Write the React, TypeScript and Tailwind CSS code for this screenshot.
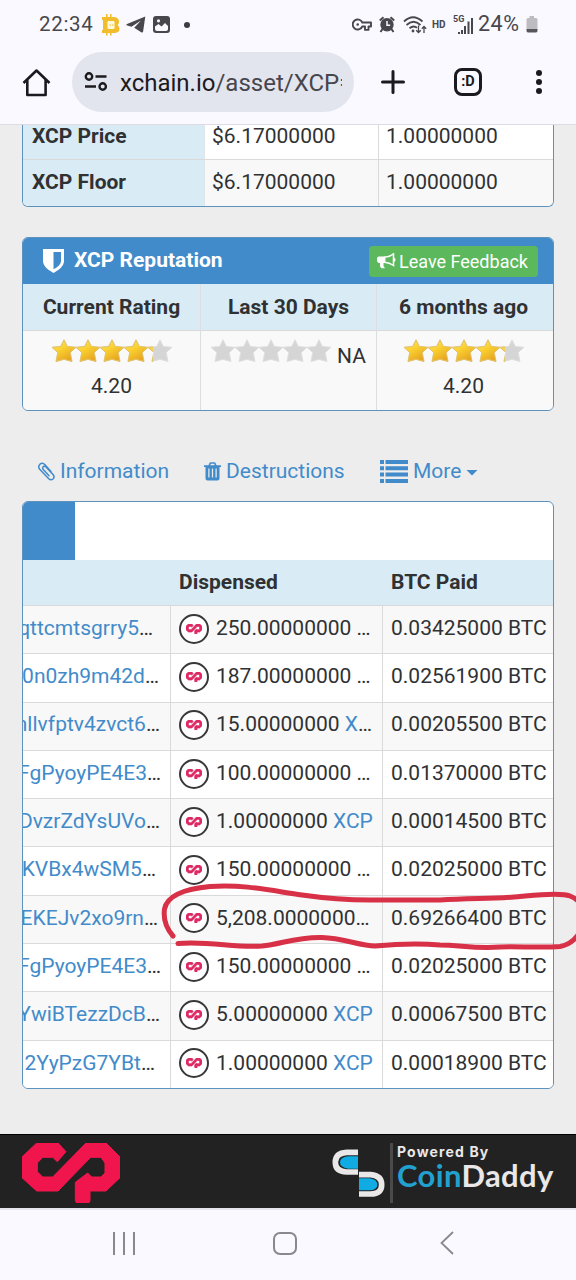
import type { ReactNode } from "react"
import clsx from "clsx"

interface Dispense {
  address: string
  // space left between the ellipsis and the cell border
  inset: number
  amount: string
  asset?: string
  truncated?: boolean
  paid: string
}

const dispenses: Dispense[] = [
  { address: "qttcmtsgrry5", inset: 17, amount: "250.00000000 ", truncated: true, paid: "0.03425000" },
  { address: "0n0zh9m42d", inset: 11, amount: "187.00000000 ", truncated: true, paid: "0.02561900" },
  { address: "nllvfptv4zvct6", inset: 10, amount: "15.00000000 ", asset: "X", truncated: true, paid: "0.00205500" },
  { address: "FgPyoyPE4E3", inset: 9, amount: "100.00000000 ", truncated: true, paid: "0.01370000" },
  { address: "DvzrZdYsUVo", inset: 10, amount: "1.00000000 ", asset: "XCP", paid: "0.00014500" },
  { address: "KVBx4wSM5", inset: 14, amount: "150.00000000 ", truncated: true, paid: "0.02025000" },
  { address: "EKEJv2xo9rn", inset: 12, amount: "5,208.0000000", truncated: true, paid: "0.69266400" },
  { address: "FgPyoyPE4E3", inset: 9, amount: "150.00000000 ", truncated: true, paid: "0.02025000" },
  { address: "YwiBTezzDcB", inset: 10, amount: "5.00000000 ", asset: "XCP", paid: "0.00067500" },
  { address: "2YyPzG7YBt", inset: 15, amount: "1.00000000 ", asset: "XCP", paid: "0.00018900" },
]

function CounterpartyMark({ className }: { className?: string }) {
  return (
    <svg viewBox="0 0 294 180" className={className} preserveAspectRatio="none" fill="currentColor" stroke="currentColor" strokeLinejoin="round">
      <path d="M44 0H108L132 26L106 56L92 43H62L46 60V86L62 102H92L192 0H252L294 42V104L252 144H204V172Q204 180 196 180H168Q160 180 160 172V118L197 90L209 102H237L249 90V60L237 43H206L108 144H44L0 104V42Z" />
    </svg>
  )
}

function StatusBar() {
  return (
    <div className="flex h-[49px] items-center pl-[39px] pr-[38px] text-[20.500px] text-[#48474c]">
      <span className="w-[63px] whitespace-nowrap tracking-[0.7px]">22:34</span>
      <svg width="18" height="22" viewBox="0 0 18 22" fill="#f2bd2c">
        <path d="M0 3h4V0h1.500v3H8V0h1.500v3H13q4 1 4 4.500Q17 10 15.500 11 17.500 12.500 17.500 15q0 3.500-4.500 4H9.500v2.500H8V19H5.500v2.500H4V19H0v-3h1V6H0Z" />
        <rect x="5.500" y="7" width="7" height="8" rx="1" fill="#fff8df" />
        <path d="M7.500 10.500H9v1H7.500zM10 10.500h1.500v1H10z" />
      </svg>
      <svg width="20" height="17" viewBox="0 0 20 17" className="ml-[6px]" fill="currentColor">
        <path d="M19.300.5 1 8q-1.300.8.300 1.400l4.200 1.400L15 4.500 8.200 11.700l7 4.500q1.500.700 1.900-.8Z" />
      </svg>
      <svg width="17" height="17" viewBox="0 0 17 17" className="ml-[7px]">
        <rect width="17" height="17" rx="3" fill="currentColor" />
        <path d="M2 13V10.500L5.500 8l3 2.500L12 7l3 3v3q0 2-2 2H4q-2 0-2-2Z" fill="#faf9ff" />
        <circle cx="5.500" cy="4.800" r="1.600" fill="#faf9ff" />
      </svg>
      <span className="ml-[14px] size-[6px] rounded-full bg-[#3d3c40]" />
      <div className="ml-auto flex items-center">
        <svg width="20" height="13" viewBox="0 0 20 13" fill="none" stroke="currentColor" strokeWidth="1.900">
          <path d="M10.300 4.500A5 5 0 1 0 10.300 8.500H13v3.400h3.500V8.500H19v-4Z" strokeLinejoin="round" />
          <circle cx="5.700" cy="6.500" r="1.300" fill="currentColor" stroke="none" />
        </svg>
        <svg width="16" height="17" viewBox="0 0 16 17" className="ml-[7px]" fill="currentColor">
          <circle cx="8" cy="8.700" r="6.700" />
          <path d="M.8 4.500 4.500 1.200M15.200 4.500 11.500 1.200M3.500 13 1.500 16M12.500 13l2 3" stroke="currentColor" strokeWidth="2" />
          <path d="M8 5v4.200h3.200" fill="none" stroke="#faf9ff" strokeWidth="1.500" />
        </svg>
        <svg width="24" height="18" viewBox="0 0 24 18" className="ml-[8px]" fill="none" stroke="currentColor" strokeWidth="1.800">
          <path d="M1 5.500q9-8.500 18.500 0M3.500 9q7-6.500 14 0M6.500 12.300q4-3.300 7.500-.500" />
          <circle cx="10" cy="15" r="1.400" fill="currentColor" stroke="none" />
          <path d="M15.500 9.500v7m-2.300-2.300 2.300 2.300 2.300-2.300M21 17v-6.500m-2.200 2.200L21 10.500l2.200 2.200" strokeWidth="1.300" />
        </svg>
        <span className="ml-[5px] w-[15px] whitespace-nowrap text-[10px] font-bold leading-[14px] tracking-normal">HD</span>
        <div className="relative ml-[5px] h-[18px] w-[22px]">
          <span className="absolute left-[1px] top-[-2px] text-[9px] font-bold leading-[11px] tracking-normal">5G</span>
          <svg width="22" height="18" viewBox="0 0 22 18" fill="currentColor">
            <path d="M6 16h2v2H6zM9 14h2v4H9zM12 10h2v8h-2zM15.500 5.500h2V18h-2zM19 2h2v16h-2z" />
          </svg>
        </div>
        <span className="ml-[4px] w-[45px] whitespace-nowrap text-[21.500px] tracking-[0.5px]">24%</span>
        <svg width="12" height="17" viewBox="0 0 12 17" className="ml-[3px]">
          <path d="M3.500 0h4.500v2H10q1.500 0 1.500 1.500V13H.5V3.500Q.5 2 2 2h1.500Z" fill="#bdbcc1" />
          <path d="M.5 13h11v1.500Q11.500 16.500 10 16.500H2Q.5 16.500.5 14.500Z" fill="#57565a" />
        </svg>
      </div>
    </div>
  )
}

function BrowserBar() {
  return (
    <div className="flex h-[66px] items-center pl-[22px] text-[#1b1a1f]">
      <svg width="29" height="29" viewBox="0 0 29 29" fill="none" stroke="currentColor" strokeWidth="2.600" strokeLinejoin="round">
        <path d="M1.500 15 14.500 2.500 27.500 15M5.300 12v15h18.300V12" />
      </svg>
      <div className="ml-[21px] flex h-[60px] w-[282px] items-center rounded-full bg-[#e3e5ee] pl-[12px]">
        <svg width="24" height="20" viewBox="0 0 24 20" fill="none" stroke="currentColor" strokeWidth="2.400">
          <circle cx="5" cy="4.500" r="3.200" />
          <path d="M11.500 4.500H22.500M1 14.500h11" />
          <circle cx="18.700" cy="14.500" r="3.200" />
        </svg>
        <div className="ml-[12px] w-[222px] overflow-hidden whitespace-nowrap pt-px text-[24px] leading-8 text-[#47464d]">
          <span className="text-[#1b1a1f]">xchain.io</span>/asset/XCP=
        </div>
      </div>
      <svg width="26" height="26" viewBox="0 0 26 26" className="ml-[26px]" stroke="currentColor" strokeWidth="3" strokeLinecap="round">
        <path d="M13 2.500v21M2.500 13h21" />
      </svg>
      <div className="ml-[48px] flex h-[28px] w-[28px] items-center justify-center rounded-[8px] border-[3px] border-[#1b1a1f] pb-px text-[14.500px] font-bold leading-[18px]">
        :D
      </div>
      <div className="ml-[54px] flex flex-col gap-[3px]">
        <span className="size-[6px] rounded-full bg-[#1b1a1f]" />
        <span className="size-[6px] rounded-full bg-[#1b1a1f]" />
        <span className="size-[6px] rounded-full bg-[#1b1a1f]" />
      </div>
    </div>
  )
}

function PriceRow({ label, striped }: { label: string; striped?: boolean }) {
  return (
    <div
      className={clsx(
        "grid h-[47px] shrink-0 grid-cols-[182px_174px_1fr] leading-[21px]",
        striped ? "border-t border-[#dadada] bg-[#f8f8f8] *:pb-[2px]" : "bg-white *:pt-[2px]",
      )}
    >
      <div className="flex items-center border-r border-[#dfe6e9] bg-[#d9ecf5] pl-[9px] font-bold">{label}</div>
      <div className="flex items-center border-r border-[#dadada] pl-[7px]">$6.17000000</div>
      <div className="flex items-center pl-[7px]">1.00000000</div>
    </div>
  )
}

const STAR = "M12 .8 15.300 7.500 24 8.300 18.200 13.500 20 22.500 12 20.300 4 22.500 5.800 13.500 0 8.300 8.700 7.500Z"

function Stars({ value, id }: { value: number; id: string }) {
  return (
    <svg width="120" height="23" viewBox="0 0 120 23" className="shrink-0">
      <defs>
        <linearGradient id={id + "-gold"} x1="0" y1="0" x2=".6" y2="1">
          <stop offset="0" stopColor="#f3d77c" />
          <stop offset=".45" stopColor="#fbd332" />
          <stop offset="1" stopColor="#e7a41f" />
        </linearGradient>
        <clipPath id={id + "-clip"}>
          <rect width={value * 24} height="23" />
        </clipPath>
      </defs>
      {[0, 24, 48, 72, 96].map((x) => (
        <path key={x} d={STAR} transform={`translate(${x} 0)`} fill="#d5d5d5" stroke="#dedede" strokeWidth="1" strokeLinejoin="round" />
      ))}
      <g clipPath={`url(#${id}-clip)`}>
        {[0, 24, 48, 72, 96].map((x) => (
          <path key={x} d={STAR} transform={`translate(${x} 0)`} fill={`url(#${id}-gold)`} stroke="#e3c268" strokeWidth="1" strokeLinejoin="round" />
        ))}
      </g>
    </svg>
  )
}

function RatingColumn({ title, last, children }: { title: string; last?: boolean; children: ReactNode }) {
  return (
    <div className={clsx("flex flex-col", !last && "border-r border-[#dcdfe1]")}>
      <div className={clsx("flex h-[46px] items-center justify-center bg-[#d9ecf5] pt-[2px] font-bold", last && "pr-[3px]")}>{title}</div>
      <div className={clsx("flex flex-1 flex-col items-center border-t border-[#dadada] bg-[#f9f9f9] pt-[8px]", last && "pr-[3px]")}>
        {children}
      </div>
    </div>
  )
}

function Reputation() {
  return (
    <section className="mt-[30px] flex h-[174px] flex-col overflow-hidden rounded-[6px] border border-[#5b92be]">
      <div className="flex h-[46px] items-center bg-[#428bca] pl-[20px] pr-[15px] text-white">
        <svg width="21" height="24" viewBox="0 0 21 24" fill="currentColor">
          <path fillRule="evenodd" d="M0 0H21V13Q20 19 10.500 24 1 19 0 13ZM10.500 3V20.300Q17.500 16.500 18 12.500V3Z" />
        </svg>
        <h2 className="ml-[10px] font-bold">XCP Reputation</h2>
        <div className="ml-auto flex h-[31px] w-[169px] items-center rounded-[4px] bg-[#5cb85c] pl-[8px] text-[18px]">
          <svg width="19" height="16" viewBox="0 0 19 16" className="shrink-0" fill="none" stroke="currentColor" strokeWidth="1.500">
            <path d="M2 4.200h5.500v5H2Q.8 9.200.8 7.800V5.600Q.8 4.200 2 4.200Z" fill="currentColor" />
            <path d="M7.500 4.200Q12.500 4 16.500.8V12.500Q12.500 9.500 7.500 9.200ZM17 5.200q1.700 1.500 0 3" />
            <path d="M3 9v4.500l1.500 1.700H8L6.500 13V9Z" fill="currentColor" stroke="none" />
          </svg>
          <span className="ml-[3px] whitespace-nowrap">Leave Feedback</span>
        </div>
      </div>
      <div className="grid flex-1 grid-cols-[178px_176px_1fr]">
        <RatingColumn title="Current Rating">
          <Stars value={4.2} id="current" />
          <span className="mt-[9px] leading-[30px]">4.20</span>
        </RatingColumn>
        <RatingColumn title="Last 30 Days">
          <div className="flex gap-[6px]">
            <Stars value={0} id="month" />
            <span className="mt-[3px] leading-[28px]">NA</span>
          </div>
        </RatingColumn>
        <RatingColumn title="6 months ago" last>
          <Stars value={4.2} id="half-year" />
          <span className="mt-[9px] leading-[30px]">4.20</span>
        </RatingColumn>
      </div>
    </section>
  )
}

function TabLinks() {
  return (
    <nav className="flex h-[90px] items-center whitespace-nowrap pl-[16px] pt-[31px] text-[#428bca]">
      <a className="flex w-[166px] items-center gap-[5px]">
        <svg width="17" height="19" viewBox="0 0 17 19" fill="none" stroke="currentColor" strokeWidth="1.500" strokeLinecap="round">
          <path d="M13 9.500 7 2.800Q4.500.2 2 2.200-.4 4.500 1.700 7.200L10.500 16.500Q12.800 18.800 15 17 17 15 15.200 12.700L8 4.900Q6.500 3.500 5.200 4.700 4 6 5.300 7.500L11 13.800" />
        </svg>
        Information
      </a>
      <a className="flex w-[176px] items-center gap-[5px]">
        <svg width="17" height="19" viewBox="0 0 17 19" fill="currentColor">
          <path fillRule="evenodd" d="M0 3.300H4.500L5.500.8Q5.800.2 6.500.2H10.500Q11.200.2 11.500.8L12.500 3.300H17V5H15.500V16.500Q15.500 18.500 13.500 18.500H3.500Q1.500 18.500 1.500 16.500V5H0ZM6.300 3.300H10.700L10.200 1.700H6.800ZM4.300 6.500V15.500H5.500V6.500ZM7.900 6.500V15.500H9.100V6.500ZM11.500 6.500V15.500H12.700V6.500Z" />
        </svg>
        Destructions
      </a>
      <a className="flex items-center gap-[5px]">
        <svg width="28" height="23" viewBox="0 0 28 23" fill="currentColor">
          <path d="M0 0h4v4H0zM5.500 0H28v4H5.500zM0 6.300h4v4H0zM5.500 6.300H28v4H5.500zM0 12.600h4v4H0zM5.500 12.600H28v4H5.500zM0 19h4v4H0zM5.500 19H28v4H5.500z" />
        </svg>
        More
        <svg width="12" height="6" viewBox="0 0 12 6" fill="currentColor" className="mt-[3px]">
          <path d="M.5 0h11L6 5.500Z" />
        </svg>
      </a>
    </nav>
  )
}

function DispenseRow({ row, striped }: { row: Dispense; striped: boolean }) {
  return (
    <div
      className={clsx(
        "grid grid-cols-[148px_212px_1fr] whitespace-nowrap border-t border-[#dadada] *:pb-[2px]",
        striped ? "bg-[#f8f8f8]" : "bg-white",
      )}
    >
      <div
        className="flex items-center justify-end overflow-hidden border-r border-[#dadada]"
        style={{ paddingRight: row.inset }}
      >
        <span className="text-[#428bca]">{row.address}</span>…
      </div>
      <div className="flex items-center border-r border-[#dadada] pl-[8px]">
        <span className="mr-[7px] flex size-[30px] shrink-0 items-center justify-center rounded-full border-[2.500px] border-[#38383a] bg-white text-[#dd2a64]">
          <CounterpartyMark className="h-[10px] w-[16px] stroke-[12]" />
        </span>
        <span className="whitespace-pre">
          {row.amount}
          {row.asset && <span className="text-[#428bca]">{row.asset}</span>}
          {row.truncated && "…"}
        </span>
      </div>
      <div className="flex items-center pl-[8px]">{row.paid} BTC</div>
    </div>
  )
}

function Dispenses() {
  return (
    <section className="flex h-[588px] flex-col overflow-hidden rounded-[6px] border border-[#5b92be] bg-white">
      <div className="h-[58px] w-[52px] shrink-0 bg-[#428bca]" />
      <div className="grid h-[45px] shrink-0 grid-cols-[148px_212px_1fr] items-center bg-[#d9ecf5] font-bold">
        <span />
        <span className="pl-[8px]">Dispensed</span>
        <span className="pl-[8px]">BTC Paid</span>
      </div>
      <div className="grid flex-1 grid-rows-10">
        {dispenses.map((row, i) => (
          <DispenseRow key={i} row={row} striped={i % 2 === 0} />
        ))}
      </div>
    </section>
  )
}

function Footer() {
  return (
    <footer className="flex h-[74px] shrink-0 items-start border-t border-black bg-[#222] pl-[22px] pt-[8px]">
      <CounterpartyMark className="h-[60px] w-[98px] stroke-[3] text-[#f0164d]" />
      <svg width="54" height="52" viewBox="0 0 162 156" className="ml-[212px] mt-[4px]">
        <path d="M78 16H44Q10 18 10 46T44 75H78" fill="none" stroke="#e9e7e8" strokeWidth="17" />
        <path d="M78 28H48Q24 31 24 46T48 65H78Z" fill="#10abe2" />
        <path d="M81 83H116Q149 86 149 113T116 141H81" fill="none" stroke="#e9e7e8" strokeWidth="17" />
        <path d="M81 94H112Q136 97 136 113T112 130H81Z" fill="#10abe2" />
      </svg>
      <div className="ml-[4px] h-[60px] w-[3px] bg-[#4a4a4a]" />
      <div className="ml-[4px] whitespace-nowrap text-[#e9e7e8]">
        <div className="font-['Inter',sans-serif] text-[14px] font-bold leading-[18px] tracking-[1.150px]">Powered By</div>
        <div className="font-['Lato',sans-serif] text-[31px] font-bold leading-[28px] tracking-[0.350px]">
          <span className="text-[#22a1cf]">Coin</span>Daddy
        </div>
      </div>
    </footer>
  )
}

function NavigationBar() {
  return (
    <div className="flex h-[72px] shrink-0 items-center border-t-2 border-[#e6e5ed] bg-[#faf9ff] pb-[4px] pl-[113px] text-[#89888d]">
      <div className="flex gap-[8px]">
        <span className="h-[23px] w-[2px] bg-[#89888d]" />
        <span className="h-[23px] w-[2px] bg-[#89888d]" />
        <span className="h-[23px] w-[2px] bg-[#89888d]" />
      </div>
      <span className="ml-[138px] h-[23px] w-[24px] rounded-[7px] border-2 border-[#89888d]" />
      <svg width="14" height="24" viewBox="0 0 14 24" className="ml-[143px]" fill="none" stroke="currentColor" strokeWidth="1.800">
        <path d="M13 1 1.500 12 13 23" />
      </svg>
    </div>
  )
}

// hand-drawn marker around the largest dispense
function Marker() {
  return (
    <svg
      className="pointer-events-none absolute left-0 top-[870px]"
      width="576"
      height="90"
      viewBox="0 870 576 90"
      fill="none"
      stroke="#d83046"
      strokeWidth="5"
      strokeLinecap="round"
      strokeLinejoin="round"
    >
      <path d="M173 936C166 928 163 920 164.500 909C167 896 183 889 210 886.500C245 884 273 891 302 895C330 899 350 900 370 900H440C475 898 500 899 525 896C545 894 563 893 570 896C578 899 583 905 584 915C585 930 574 944 560 946.500C540 948 515 946 500 947C475 949 460 945 440 945C418 943 396 944 375 946C360 946 343 938 322 937.500C295 937 282 944 262 946C235 948 210 941 178 943.500" />
    </svg>
  )
}

export default function App() {
  return (
    <div className="relative flex h-[1280px] w-[576px] flex-col overflow-hidden bg-[#ededed] font-['Roboto',sans-serif] text-[21px] text-[#303133]">
      <header className="h-[125px] shrink-0 border-b border-[#dddce4] bg-[#faf9ff]">
        <StatusBar />
        <BrowserBar />
      </header>
      <main className="h-[1009px] shrink-0 px-[22px]">
        <section className="flex h-[82px] flex-col justify-end overflow-hidden rounded-b-[6px] border border-t-0 border-[#5b92be]">
          <PriceRow label="XCP Price" />
          <PriceRow label="XCP Floor" striped />
        </section>
        <Reputation />
        <TabLinks />
        <Dispenses />
      </main>
      <Footer />
      <NavigationBar />
      <Marker />
    </div>
  )
}
